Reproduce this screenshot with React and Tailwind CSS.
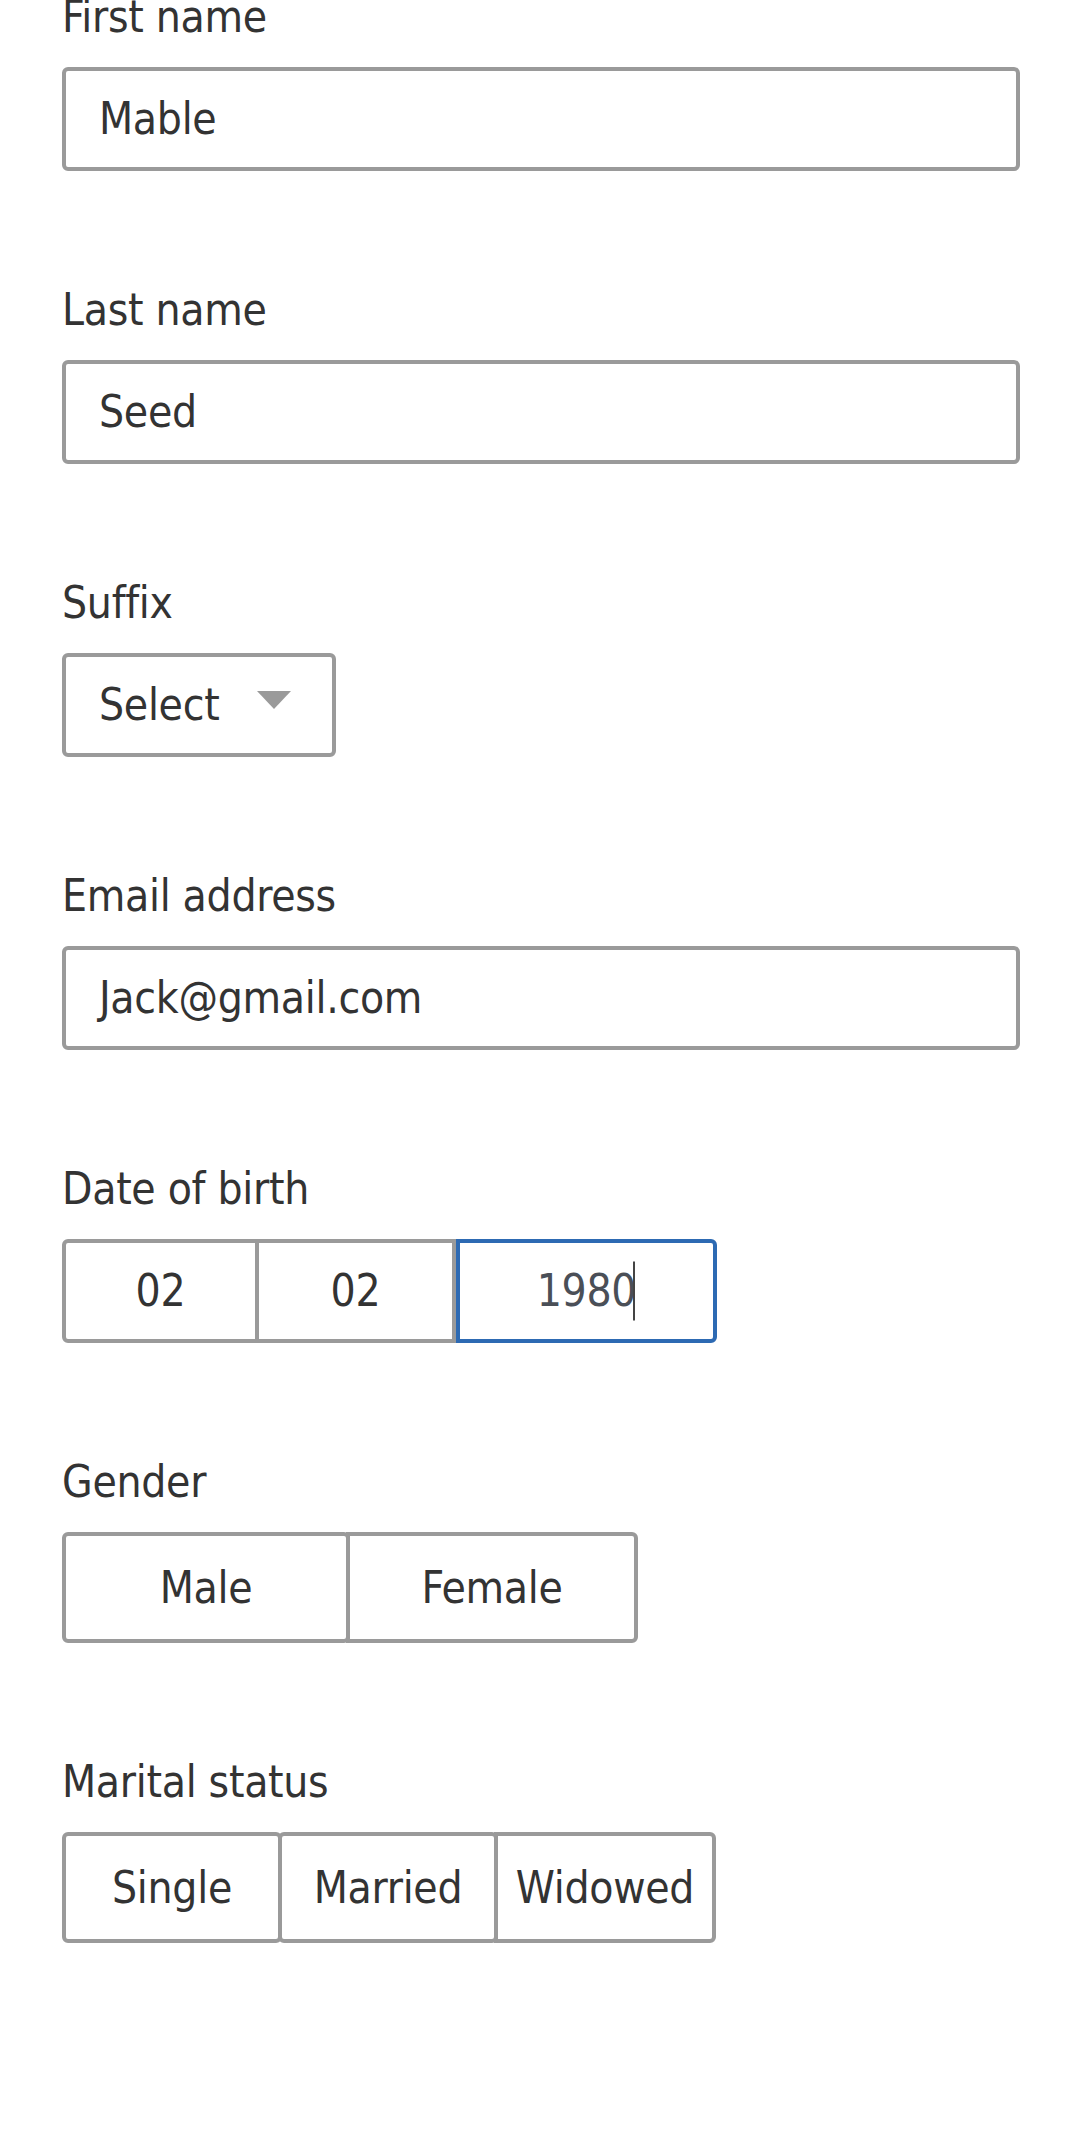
import React from "react";

const font = { fontFamily: '"Liberation Sans Narrow", "DejaVu Sans Condensed", "Liberation Sans", sans-serif' };

function Label({ children }) {
  return <div className="text-[44px] tracking-[-0.3px] leading-[56px] text-[#333] mb-[22px]">{children}</div>;
}

function TextBox({ value }) {
  return (
    <div className="h-[104px] w-full border-[4px] border-[#9a9a9a] rounded-[6px] bg-white flex items-center pl-[33px] text-[44px] tracking-[-0.3px] text-[#333]">
      {value}
    </div>
  );
}

function Field({ label, children }) {
  return (
    <div className="mb-[111px]">
      <Label>{label}</Label>
      {children}
    </div>
  );
}

export default function App() {
  return (
    <div className="min-h-[2144px] bg-white pl-[62px] pr-[60px] overflow-hidden" style={font}>
      <div className="-mt-[11px]">
        <Field label="First name">
          <TextBox value="Mable" />
        </Field>
        <Field label="Last name">
          <TextBox value="Seed" />
        </Field>
        <Field label="Suffix">
          <div className="h-[104px] w-[274px] border-[4px] border-[#9a9a9a] rounded-[6px] bg-white flex items-center justify-between pl-[33px] pr-[41px] text-[44px] tracking-[-0.3px] text-[#333]">
            <span>Select</span>
            <svg className="-mt-[10px]" width="34" height="18" viewBox="0 0 34 18">
              <polygon points="0,0 34,0 17,18" fill="#9a9a9a" />
            </svg>
          </div>
        </Field>
        <Field label="Email address">
          <TextBox value="Jack@gmail.com" />
        </Field>
        <Field label="Date of birth">
          <div className="flex h-[104px] text-[44px] tracking-[-0.3px]">
            <div className="w-[197px] h-full border-[4px] border-[#9a9a9a] rounded-l-[6px] flex items-center justify-center text-[#333]">02</div>
            <div className="w-[201px] -ml-[4px] h-full border-[4px] border-[#9a9a9a] flex items-center justify-center text-[#333]">02</div>
            <div className="w-[261px] h-full border-[4px] border-[#2d6ab3] rounded-r-[6px] flex items-center justify-center text-[#4a4f57]">
              <span className="relative">
                1980
                <span className="absolute right-[1px] top-[50%] -translate-y-1/2 w-[2px] h-[59px] bg-[#444]" />
              </span>
            </div>
          </div>
        </Field>
        <Field label="Gender">
          <div className="flex h-[111px] text-[44px] tracking-[-0.3px] text-[#333]">
            <div className="relative z-10 w-[288px] h-full border-[4px] border-[#9a9a9a] rounded-[6px] bg-white flex items-center justify-center">Male</div>
            <div className="w-[292px] -ml-[4px] h-full border-[4px] border-[#9a9a9a] rounded-r-[6px] bg-white flex items-center justify-center">Female</div>
          </div>
        </Field>
        <Field label="Marital status">
          <div className="flex h-[111px] text-[44px] tracking-[-0.3px] text-[#333]">
            <div className="relative z-20 w-[220px] h-full border-[4px] border-[#9a9a9a] rounded-[6px] bg-white flex items-center justify-center">Single</div>
            <div className="relative z-10 w-[220px] -ml-[4px] h-full border-[4px] border-[#9a9a9a] rounded-[6px] bg-white flex items-center justify-center">Married</div>
            <div className="w-[222px] -ml-[4px] h-full border-[4px] border-[#9a9a9a] rounded-r-[6px] bg-white flex items-center justify-center">Widowed</div>
          </div>
        </Field>
      </div>
    </div>
  );
}
